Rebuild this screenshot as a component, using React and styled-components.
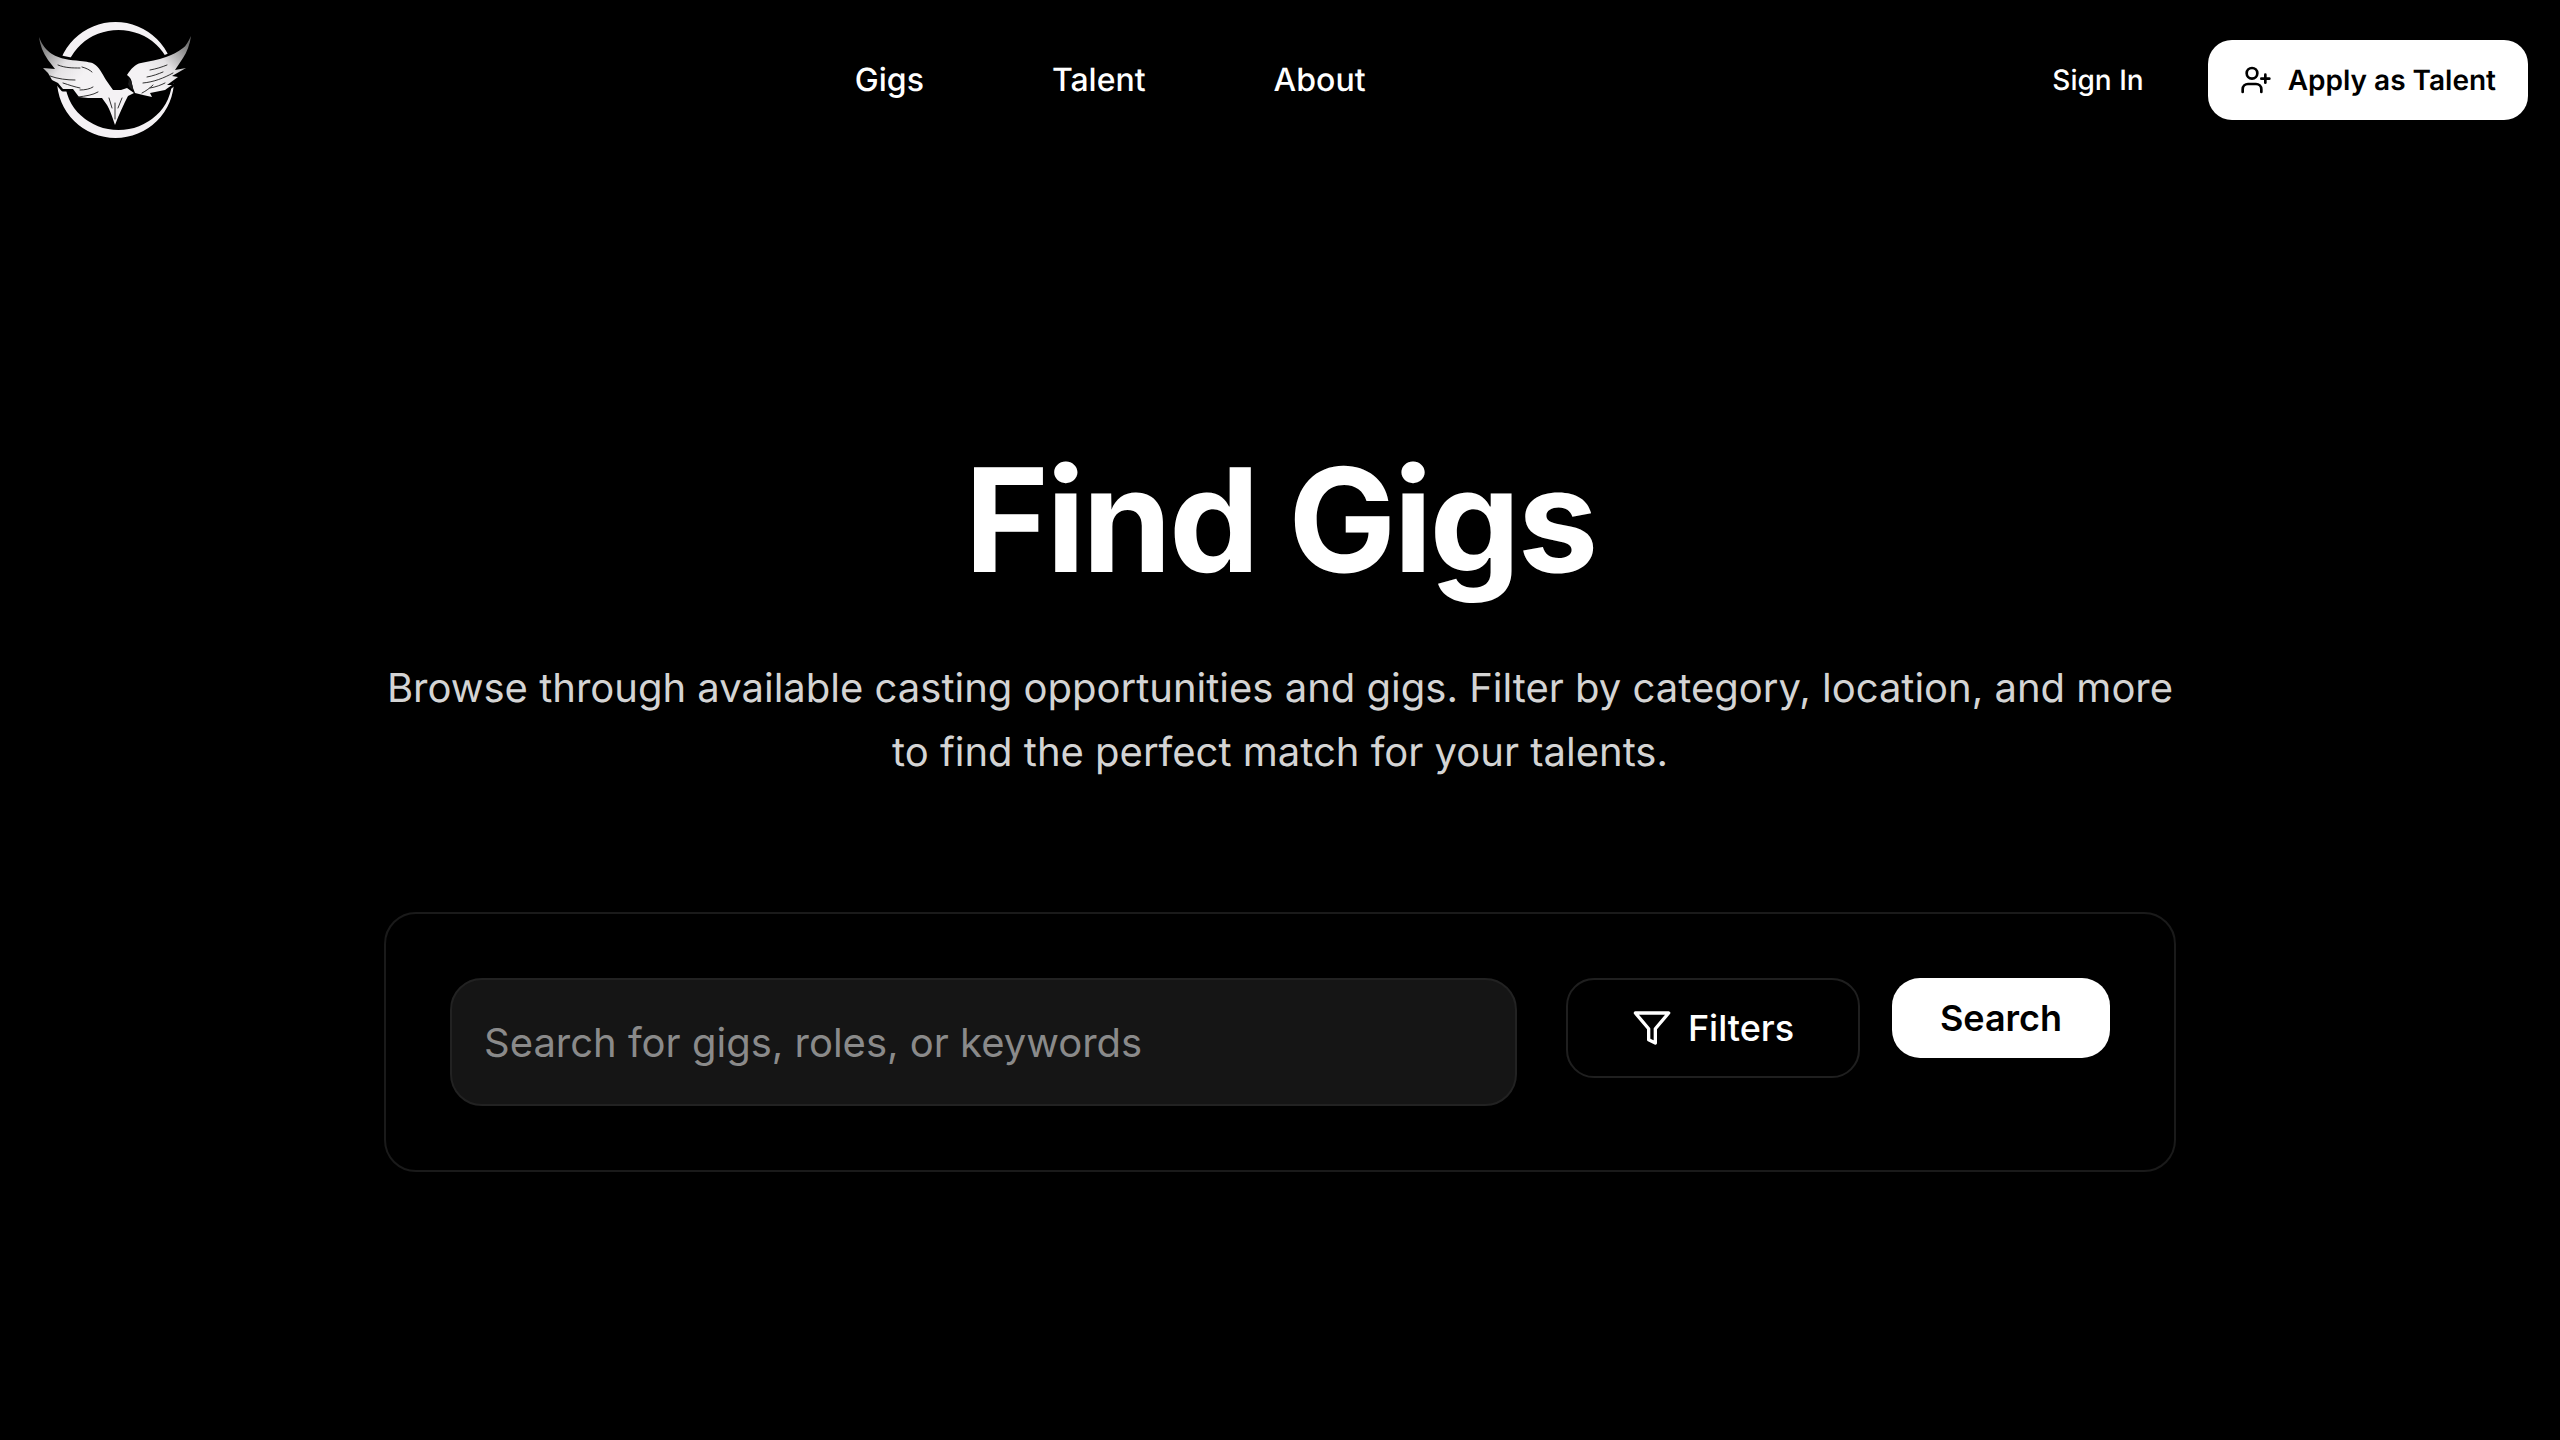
import React from 'react';
import styled, { createGlobalStyle } from 'styled-components';

const GlobalStyle = createGlobalStyle`
	html, body {
		margin: 0;
		background: #000;
		font-family: Inter, "Liberation Sans", sans-serif;
		color: #fff;
		text-rendering: geometricPrecision;
	}
	* {
		box-sizing: border-box;
	}
`;

const Page = styled.div`
	min-height: 1440px;
	background: #000;
`;

const Header = styled.header`
	height: 160px;
	padding: 0 32px;
	display: flex;
	align-items: center;
	justify-content: space-between;
`;

const LogoBox = styled.a`
	display: block;
	width: 168px;
	height: 160px;
`;

const Nav = styled.nav`
	display: flex;
	gap: 128px;
`;

const NavLink = styled.a`
	font-size: 32px;
	font-weight: 500;
	line-height: 48px;
	color: #fff;
`;

const HeaderActions = styled.div`
	display: flex;
	align-items: center;
	gap: 32px;
`;

const SignIn = styled.a`
	padding: 0 32px;
	font-size: 28px;
	font-weight: 500;
	line-height: 80px;
	color: #fff;
`;

const ApplyButton = styled.a`
	display: flex;
	align-items: center;
	gap: 16px;
	height: 80px;
	padding: 0 32px;
	border-radius: 24px;
	background: #fff;
	color: #000;
	font-size: 28px;
	font-weight: 600;
`;

const Hero = styled.main`
	padding-top: 288px;
	display: flex;
	flex-direction: column;
	align-items: center;
`;

const Title = styled.h1`
	margin: 0;
	font-size: 144px;
	font-weight: 700;
	line-height: 144px;
	letter-spacing: -2.88px;
	color: #fff;
`;

const Lead = styled.p`
	margin: 64px 0 0;
	width: 1792px;
	text-align: center;
	font-size: 40px;
	line-height: 64px;
	color: #d4d4d4;
`;

const SearchCard = styled.section`
	margin-top: 128px;
	width: 1792px;
	padding: 64px;
	border: 2px solid #1a1a1a;
	border-radius: 32px;
	display: flex;
	align-items: flex-start;
`;

const SearchInput = styled.input`
	flex: 1;
	min-width: 0;
	height: 128px;
	margin-right: 49px;
	padding: 0 32px;
	border: 2px solid #222;
	border-radius: 32px;
	background: #151515;
	color: #fff;
	font-family: inherit;
	font-size: 40px;
	outline: none;

	&::placeholder {
		color: #8a8a8a;
		opacity: 1;
	}
`;

const FiltersButton = styled.button`
	display: flex;
	align-items: center;
	justify-content: center;
	gap: 16px;
	width: 294px;
	height: 100px;
	margin-right: 32px;
	border: 2px solid #1f1f1f;
	border-radius: 28px;
	background: #000;
	color: #fff;
	font-family: inherit;
	font-size: 36px;
	font-weight: 500;
`;

const SearchButton = styled.button`
	width: 218px;
	height: 80px;
	border: 0;
	border-radius: 28px;
	background: #fff;
	color: #000;
	font-family: inherit;
	font-size: 36px;
	font-weight: 600;
`;

const LEFT_WING =
	'M39 37C42 45 46 50 52 54C60 59 70 60 80 61C87 62 91 62 94 64C99 67 102 73 106 80L113 90L121 90L127 88L134 93L128 96C124 104 119 114 115 125C112 116 110 110 107 105L102 98L88 98L79 97L73 89L63 89L58 83L52 80L48 73L43 68L55 69L48 60C43 53 40 45 39 37Z';
const RIGHT_WING =
	'M191 36C188 42 186 46 183 48C178 52 172 55 166 57C158 60 149 61 141 63C135 64 131 69 127 75C130 77 132 80 132 84L133 88L135 93L143 95L152 97L150 93L165 90L172 85L167 85L178 77L172 76L186 68L175 70L183 58C187 52 190 44 191 36Z';

const Logo = () => (
	<svg width="168" height="160" viewBox="32 0 168 160" fill="none">
		<defs>
			<linearGradient id="wingLeft" x1="42" y1="42" x2="82" y2="76" gradientUnits="userSpaceOnUse">
				<stop offset="0" stopColor="#6f6f6f" />
				<stop offset="0.6" stopColor="#e4e2e4" />
				<stop offset="1" stopColor="#f4f2f4" />
			</linearGradient>
			<linearGradient id="wingRight" x1="188" y1="42" x2="150" y2="76" gradientUnits="userSpaceOnUse">
				<stop offset="0" stopColor="#6f6f6f" />
				<stop offset="0.6" stopColor="#e4e2e4" />
				<stop offset="1" stopColor="#f4f2f4" />
			</linearGradient>
		</defs>
		<path
			fillRule="evenodd"
			fill="#f4f1f4"
			d="M57 80a58.500 58 0 1 0 117 0a58.500 58 0 1 0 -117 0ZM65 80a53.500 50 0 1 1 107 0a53.500 50 0 1 1 -107 0Z"
		/>
		<g stroke="#000" strokeWidth="5" strokeLinejoin="round">
			<path d={LEFT_WING} fill="#000" />
			<path d={RIGHT_WING} fill="#000" />
		</g>
		<path d={LEFT_WING} fill="url(#wingLeft)" />
		<path d={RIGHT_WING} fill="url(#wingRight)" />
		<path d="M128 78C131 80 133 85 133 90C131 89 129 87 128 84C129 82 129 80 128 78Z" fill="#1a1a1a" />
		<g stroke="#1c1c1c" strokeWidth="0.9" strokeLinecap="round">
			<path d="M58 65C65 68 73 68 80 68" />
			<path d="M82 67C86 68 90 70 92 72" />
			<path d="M50 76C58 79 67 80 75 80" />
			<path d="M63 83C69 85 75 87 80 88" />
			<path d="M80 90C85 90 90 89 93 87" />
			<path d="M78 97C86 96 93 95 98 92" />
			<path d="M150 70C156 69 162 67 167 65" />
			<path d="M147 77C153 76 158 74 163 72" />
			<path d="M143 83C154 82 164 78 173 73" />
			<path d="M150 88C156 87 161 85 165 83" />
			<path d="M142 93C146 91 150 88 153 85" />
			<path d="M115 119L115 103" />
			<path d="M112 108L109 98" />
			<path d="M118 108L122 98" />
		</g>
	</svg>
);

const UserPlusIcon = () => (
	<svg width="32" height="32" viewBox="0 0 24 24" fill="none" stroke="#000" strokeWidth="2" strokeLinecap="round" strokeLinejoin="round">
		<path d="M16 21v-2a4 4 0 0 0-4-4H6a4 4 0 0 0-4 4v2" />
		<circle cx="9" cy="7" r="4" />
		<path d="M19 8v6" />
		<path d="M22 11h-6" />
	</svg>
);

const FilterIcon = () => (
	<svg width="40" height="40" viewBox="0 0 24 24" fill="none" stroke="#fff" strokeWidth="2" strokeLinecap="round" strokeLinejoin="round">
		<polygon points="22 3 2 3 10 12.460 10 19 14 21 14 12.460 22 3" />
	</svg>
);

const App = () => (
	<Page>
		<GlobalStyle />
		<Header>
			<LogoBox>
				<Logo />
			</LogoBox>
			<Nav>
				<NavLink>Gigs</NavLink>
				<NavLink>Talent</NavLink>
				<NavLink>About</NavLink>
			</Nav>
			<HeaderActions>
				<SignIn>Sign In</SignIn>
				<ApplyButton>
					<UserPlusIcon />
					Apply as Talent
				</ApplyButton>
			</HeaderActions>
		</Header>
		<Hero>
			<Title>Find Gigs</Title>
			<Lead>
				Browse through available casting opportunities and gigs. Filter by category, location, and more
				<br />
				to find the perfect match for your talents.
			</Lead>
			<SearchCard>
				<SearchInput placeholder="Search for gigs, roles, or keywords" />
				<FiltersButton>
					<FilterIcon />
					Filters
				</FiltersButton>
				<SearchButton>Search</SearchButton>
			</SearchCard>
		</Hero>
	</Page>
);

export default App;
